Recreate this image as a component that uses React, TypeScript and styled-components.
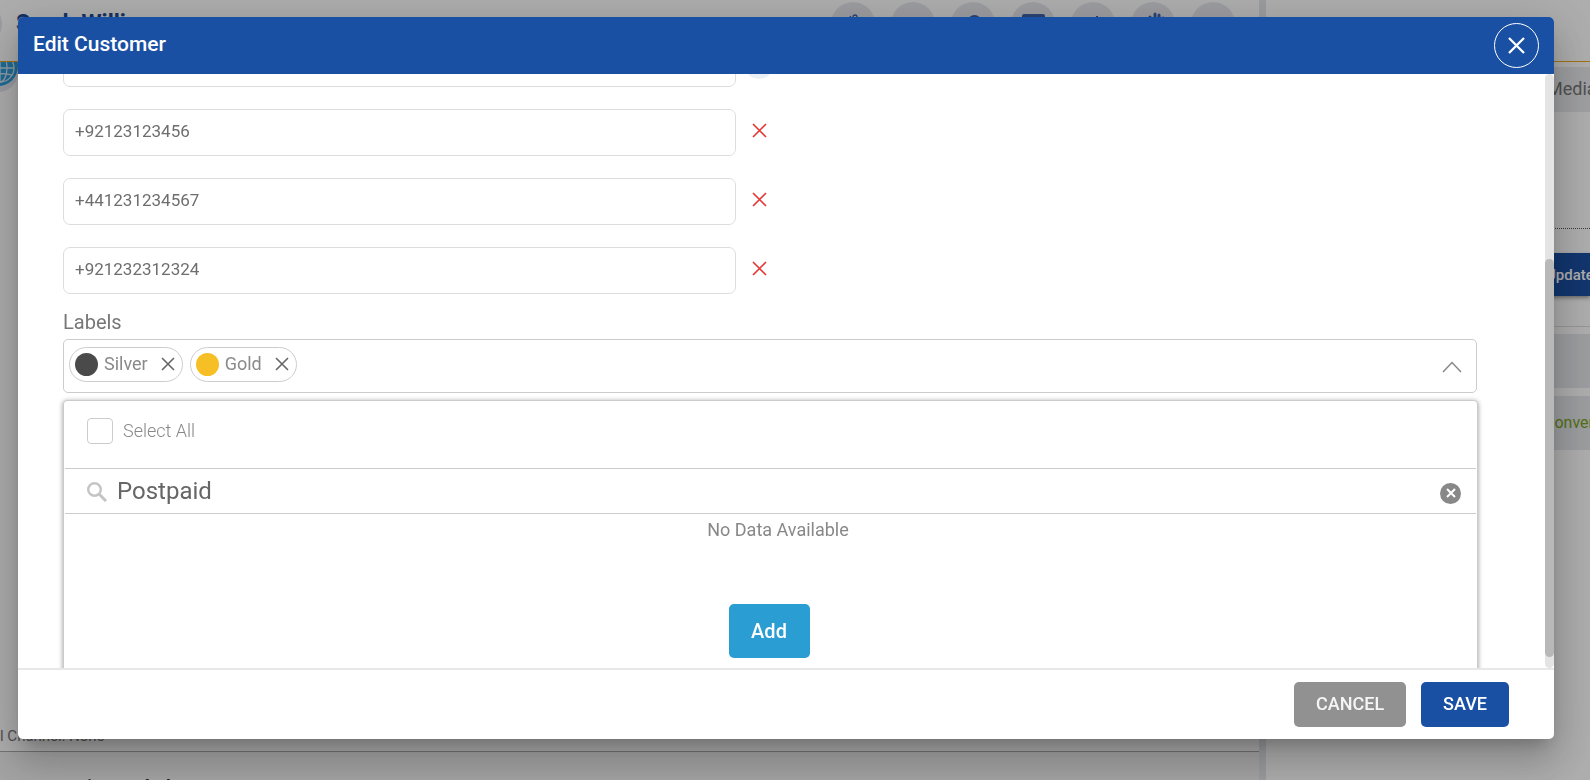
import React, { useLayoutEffect, useRef } from 'react';
import styled, { createGlobalStyle, css } from 'styled-components';

const Global = createGlobalStyle`
  * { box-sizing: border-box; }
  body { margin: 0; background: #fff; font-family: Roboto, "Liberation Sans", sans-serif; }
  button, input { font-family: inherit; }
  button { cursor: pointer; }
`;

/* ---------- customer workspace behind the dialog ---------- */

const Workspace = styled.div`
  height: 100vh;
  display: flex;
  overflow: hidden;
`;

const MainPane = styled.section`
  flex: 1;
  min-width: 0;
  display: flex;
  flex-direction: column;
`;

const CustomerBar = styled.header`
  height: 62px;
  flex: none;
  display: flex;
  align-items: flex-start;
  border-bottom: 1px solid #f0a91b;
`;

const Avatar = styled.span`
  width: 24px;
  height: 48px;
  margin: 0 14px 0 -22px;
  border-radius: 0 24px 24px 0;
  background: #e4e8f0;
`;

const CustomerName = styled.h1`
  flex: 1;
  margin: 11px 0 0;
  font-size: 23px;
  line-height: 26px;
  font-weight: 700;
  color: #24488e;
`;

const Actions = styled.div`
  display: flex;
  gap: 16px;
  margin: 2px 24px 0 0;
`;

const RoundAction = styled.button`
  width: 44px;
  height: 44px;
  padding: 0;
  border: 0;
  border-radius: 50%;
  background: #e6e7ec;
  color: #3c62a8;
  display: flex;
  align-items: center;
  justify-content: center;
`;

const ChannelRow = styled.div`
  flex: 1;
`;

const ChannelBadge = styled.span`
  display: block;
  width: 40px;
  height: 30px;
  margin-left: -22px;
  border-radius: 0 0 20px 20px;
  background: #e2e6ee;
  overflow: hidden;
`;

const ActiveChannel = styled.p`
  margin: 0;
  height: 28px;
  font-size: 15px;
  line-height: 24px;
  color: #777;
  border-bottom: 1px solid #aaa;
  white-space: nowrap;
`;

const Conversation = styled.div`
  height: 28px;
  padding-top: 20px;
  background: #f1f1f1;
  font-size: 19px;
  line-height: 30px;
  font-weight: 700;
  color: #333;
`;

const Gutter = styled.div`
  width: 7px;
  flex: none;
  background: #e4e6ec;
`;

const SidePane = styled.aside`
  width: 324px;
  flex: none;
`;

const SideBar = styled.div`
  height: 62px;
  border-bottom: 1px solid #f0a91b;
`;

const SideTab = styled.div`
  height: 45px;
  margin-top: 5px;
  padding-left: 281px;
  font-size: 18px;
  line-height: 44px;
  color: #777;
  background: #eaebed;
  white-space: nowrap;
`;

const SideForm = styled.div`
  height: 98px;
  padding: 24px 0 0;
  margin-top: 116px;
  border-top: 1px dotted #555;
`;

const UpdateButton = styled.button`
  display: block;
  width: 100%;
  height: 43px;
  padding: 0 0 0 280px;
  border: 0;
  background: #1a4fa3;
  color: #fff;
  font-size: 15px;
  font-weight: 500;
  text-align: left;
  box-shadow: 0 2px 4px rgba(0, 0, 0, 0.4);
  white-space: nowrap;
`;

const SideCards = styled.div`
  padding-top: 7px;
  border-top: 1px solid #ddd;
  display: grid;
  gap: 8px;
`;

const SideCard = styled.div`
  height: 54px;
  padding-left: 278px;
  background: #e6e8ec;
  font-size: 16px;
  line-height: 54px;
  color: #7ba51c;
  white-space: nowrap;
`;

/* ---------- dialog ---------- */

const Backdrop = styled.div`
  position: fixed;
  inset: 0;
  padding: 17px 36px 41px 18px;
  background: rgba(0, 0, 0, 0.32);
  display: flex;
`;

const Dialog = styled.form`
  flex: 1;
  min-width: 0;
  display: flex;
  flex-direction: column;
  overflow: hidden;
  border-radius: 5px;
  background: #fff;
  box-shadow: 0 11px 15px -7px rgba(0, 0, 0, 0.2), 0 24px 38px 3px rgba(0, 0, 0, 0.14),
    0 9px 46px 8px rgba(0, 0, 0, 0.12);
`;

const DialogHeader = styled.header`
  height: 57px;
  flex: none;
  padding: 0 15px;
  display: flex;
  align-items: center;
  justify-content: space-between;
  background: #1a50a3;
`;

const DialogTitle = styled.h2`
  margin: 0;
  padding-bottom: 4px;
  font-size: 21px;
  line-height: 26px;
  font-weight: 500;
  color: #fff;
`;

const iconButton = css`
  padding: 0;
  border: 0;
  background: none;
  display: flex;
  align-items: center;
  justify-content: center;
`;

const CloseButton = styled.button`
  ${iconButton}
  width: 45px;
  height: 45px;
  border: 1px solid #fff;
  border-radius: 50%;
  color: #fff;
`;

const BodyFrame = styled.div`
  flex: 1;
  min-height: 0;
  display: flex;
`;

const Body = styled.div`
  flex: 1;
  min-width: 0;
  padding: 0 68px 0 45px;
  overflow-y: auto;
  scrollbar-width: none;
`;

const ScrollTrack = styled.div`
  width: 9px;
  flex: none;
  padding-bottom: 11px;
  display: flex;
  flex-direction: column;
  justify-content: flex-end;
  border-radius: 5px;
  background: #e4e4e4;
`;

const ScrollThumb = styled.div`
  height: 68.3%;
  border-radius: 5px;
  background: #b8b8b8;
`;

const PhoneList = styled.div`
  display: grid;
  gap: 22px;
`;

const PhoneRow = styled.div`
  display: flex;
  align-items: center;
  gap: 8px;
`;

const PhoneInput = styled.input`
  width: 47.6%;
  height: 47px;
  padding: 0 11px 4px;
  border: 1px solid #ddd;
  border-radius: 7px;
  outline: 0;
  background: #fff;
  font-size: 17px;
  color: #6e6e6e;
`;

const RemoveButton = styled.button`
  ${iconButton}
  width: 30px;
  height: 44px;
  padding-bottom: 4px;
  color: #e53935;
`;

const AddPhoneButton = styled(RemoveButton)`
  height: 30px;
  border-radius: 50%;
  background: #e9eff7;
`;

const FieldLabel = styled.div`
  padding-top: 15px;
  height: 45px;
  font-size: 20px;
  line-height: 26px;
  color: #777;
`;

const LabelSelect = styled.div`
  height: 54px;
  padding: 0 14px 4px 5px;
  display: flex;
  align-items: center;
  gap: 7px;
  border: 1px solid #ccc;
  border-radius: 5px;
`;

const Chip = styled.span`
  height: 35px;
  padding: 0 6px 0 5px;
  display: flex;
  align-items: center;
  border: 1px solid #ccc;
  border-radius: 18px;
  font-size: 18px;
  line-height: 32px;
  color: #8a8a8a;
`;

const Dot = styled.span<{ $color: string }>`
  width: 23px;
  height: 23px;
  margin-right: 6px;
  border-radius: 50%;
  background: ${(p) => p.$color};
`;

const ChipRemove = styled.button`
  ${iconButton}
  margin-left: 12px;
  width: 16px;
  height: 16px;
  color: #666;
`;

const Toggle = styled.button`
  ${iconButton}
  margin-left: auto;
  height: 40px;
  padding-top: 6px;
  color: #888;
`;

const Dropdown = styled.div`
  margin: 7px -1px 0 0;
  height: 300px;
  padding: 0 1px;
  border: 1px solid #ccc;
  border-radius: 4px;
  background: #fff;
  box-shadow: 0 1px 5px #959595;
`;

const SelectAll = styled.label`
  height: 67px;
  padding: 0 22px 7px;
  display: flex;
  align-items: center;
  gap: 10px;
  font-size: 18px;
  line-height: 24px;
  font-weight: 300;
  color: #888;
`;

const CheckBox = styled.input`
  appearance: none;
  width: 26px;
  height: 26px;
  margin: 0;
  border: 1px solid #ccc;
  border-radius: 4px;
`;

const SearchBar = styled.div`
  height: 46px;
  padding: 2px 15px 0 22px;
  display: flex;
  align-items: center;
  gap: 10px;
  border: solid #ccc;
  border-width: 1px 0;
`;

const SearchInput = styled.input`
  flex: 1;
  min-width: 0;
  height: 40px;
  padding: 0 0 2px;
  border: 0;
  outline: 0;
  background: none;
  font-size: 24px;
  color: #666;
`;

const ClearButton = styled.button`
  ${iconButton}
  width: 21px;
  height: 21px;
  margin-top: 2px;
  border-radius: 50%;
  background: #888;
  color: #fff;
`;

const EmptyState = styled.div`
  padding: 4px 0 0 15px;
  height: 90px;
  font-size: 18px;
  line-height: 24px;
  text-align: center;
  color: #888;
`;

const AddRow = styled.div`
  padding-right: 3px;
  display: flex;
  justify-content: center;
`;

const AddButton = styled.button`
  width: 81px;
  height: 54px;
  border: 0;
  border-radius: 5px;
  background: #2a9dd2;
  color: #fff;
  font-size: 20px;
  font-weight: 500;
`;

const Footer = styled.footer`
  height: 71px;
  flex: none;
  padding: 0 45px;
  display: flex;
  align-items: center;
  justify-content: flex-end;
  gap: 15px;
  border-top: 2px solid #e8e8e8;
`;

const FooterButton = styled.button<{ $primary?: boolean }>`
  height: 45px;
  padding: 0 22px 2px;
  border: 0;
  border-radius: 5px;
  background: ${(p) => (p.$primary ? '#1a50a3' : '#919191')};
  color: ${(p) => (p.$primary ? '#fff' : '#f5f5f5')};
  font-size: 18px;
  font-weight: 500;
`;

const Cross = ({ size, weight }: { size: number; weight: number }) => (
  <svg width={size} height={size} viewBox={`0 0 ${size} ${size}`} fill="none" stroke="currentColor" strokeWidth={weight} aria-hidden>
    <path d={`M1 1 L${size - 1} ${size - 1} M${size - 1} 1 L1 ${size - 1}`} />
  </svg>
);

const Globe = () => (
  <svg width="40" height="30" viewBox="0 0 40 30" fill="none" stroke="#d5e6f2" strokeWidth="1.3" aria-hidden>
    <circle cx="20" cy="4" r="20" fill="#2e9fe0" stroke="none" />
    <circle cx="22" cy="6" r="14" />
    <ellipse cx="22" cy="6" rx="7" ry="14" />
    <path d="M22 -8V20M8 6H36M10 13Q22 10 34 13M11 -1H33" />
  </svg>
);

const actionIcons: { name: string; art: React.ReactNode }[] = [
  { name: 'Link', art: <path strokeWidth="1.3" d="M13 8l2 4M16 9a2 2 0 1 1 4 0v5" /> },
  { name: 'Note', art: <path d="M10 18h10M10 22h10" /> },
  { name: 'Profile', art: <circle cx="17.5" cy="14" r="7" fill="currentColor" stroke="none" /> },
  { name: 'Mail', art: <rect x="5" y="6" width="23" height="18" rx="2" fill="currentColor" stroke="none" /> },
  { name: 'Call', art: <path d="M20 8v4l-5 6" /> },
  { name: 'Hold', art: <path strokeWidth="3" strokeLinecap="round" d="M13 20V9M18 20V6M22 20V7M26 20V10" /> },
  { name: 'More', art: <path d="M10 18h12" /> },
];

const phones = ['+92123123456', '+441231234567', '+921232312324'];
const labels = [
  { name: 'Silver', color: '#4a4a4a' },
  { name: 'Gold', color: '#f6bf26' },
];

export default function App() {
  const body = useRef<HTMLDivElement>(null);

  // Open with the later phone numbers and the label picker in view.
  useLayoutEffect(() => {
    if (body.current) body.current.scrollTop = 34;
  }, []);

  return (
    <>
      <Global />
      <Workspace>
        <MainPane>
          <CustomerBar>
            <Avatar />
            <CustomerName>Sarah Williams</CustomerName>
            <Actions>
              {actionIcons.map((a) => (
                <RoundAction key={a.name} type="button" aria-label={a.name}>
                  <svg width="32" height="32" viewBox="0 0 32 32" fill="none" stroke="currentColor" strokeWidth="2" aria-hidden>
                    {a.art}
                  </svg>
                </RoundAction>
              ))}
            </Actions>
          </CustomerBar>
          <ChannelRow>
            <ChannelBadge>
              <Globe />
            </ChannelBadge>
          </ChannelRow>
          <ActiveChannel>l Channel: None</ActiveChannel>
          <Conversation>Conversation ended</Conversation>
        </MainPane>
        <Gutter />
        <SidePane>
          <SideBar />
          <SideTab>Media</SideTab>
          <SideForm>
            <UpdateButton type="button">Update</UpdateButton>
          </SideForm>
          <SideCards>
            <SideCard />
            <SideCard>Conversation</SideCard>
          </SideCards>
        </SidePane>
      </Workspace>

      <Backdrop>
        <Dialog role="dialog" aria-labelledby="dialog-title" onSubmit={(e) => e.preventDefault()}>
          <DialogHeader>
            <DialogTitle id="dialog-title">Edit Customer</DialogTitle>
            <CloseButton type="button" aria-label="Close">
              <Cross size={17} weight={2.3} />
            </CloseButton>
          </DialogHeader>

          <BodyFrame>
            <Body ref={body}>
              <PhoneList>
                <PhoneRow>
                  <PhoneInput type="tel" aria-label="Phone number" />
                  <AddPhoneButton type="button" aria-label="Add phone number" />
                </PhoneRow>
                {phones.map((phone) => (
                  <PhoneRow key={phone}>
                    <PhoneInput type="tel" aria-label="Phone number" defaultValue={phone} />
                    <RemoveButton type="button" aria-label="Remove phone number">
                      <Cross size={15} weight={1.7} />
                    </RemoveButton>
                  </PhoneRow>
                ))}
              </PhoneList>

              <FieldLabel id="labels">Labels</FieldLabel>
              <LabelSelect role="group" aria-labelledby="labels">
                {labels.map((label) => (
                  <Chip key={label.name}>
                    <Dot $color={label.color} />
                    {label.name}
                    <ChipRemove type="button" aria-label="Remove label">
                      <Cross size={14} weight={1.6} />
                    </ChipRemove>
                  </Chip>
                ))}
                <Toggle type="button" aria-label="Close label list">
                  <svg width="20" height="12" viewBox="0 0 20 12" fill="none" stroke="currentColor" strokeWidth="1.5" aria-hidden>
                    <path d="M1 11 10 1.500 19 11" />
                  </svg>
                </Toggle>
              </LabelSelect>

              <Dropdown>
                <SelectAll>
                  <CheckBox type="checkbox" />
                  Select All
                </SelectAll>
                <SearchBar>
                  <svg width="20" height="20" viewBox="0 0 20 20" fill="none" stroke="#c4c4c4" aria-hidden>
                    <circle cx="7.500" cy="7.500" r="6.300" strokeWidth="2.400" />
                    <path d="M12 12 19 19" strokeWidth="3" />
                  </svg>
                  <SearchInput type="text" aria-label="Search labels" defaultValue="Postpaid" />
                  <ClearButton type="button" aria-label="Clear search">
                    <Cross size={10} weight={2} />
                  </ClearButton>
                </SearchBar>
                <EmptyState>No Data Available</EmptyState>
                <AddRow>
                  <AddButton type="button">Add</AddButton>
                </AddRow>
              </Dropdown>
            </Body>
            <ScrollTrack>
              <ScrollThumb />
            </ScrollTrack>
          </BodyFrame>

          <Footer>
            <FooterButton type="button">CANCEL</FooterButton>
            <FooterButton type="submit" $primary>
              SAVE
            </FooterButton>
          </Footer>
        </Dialog>
      </Backdrop>
    </>
  );
}
